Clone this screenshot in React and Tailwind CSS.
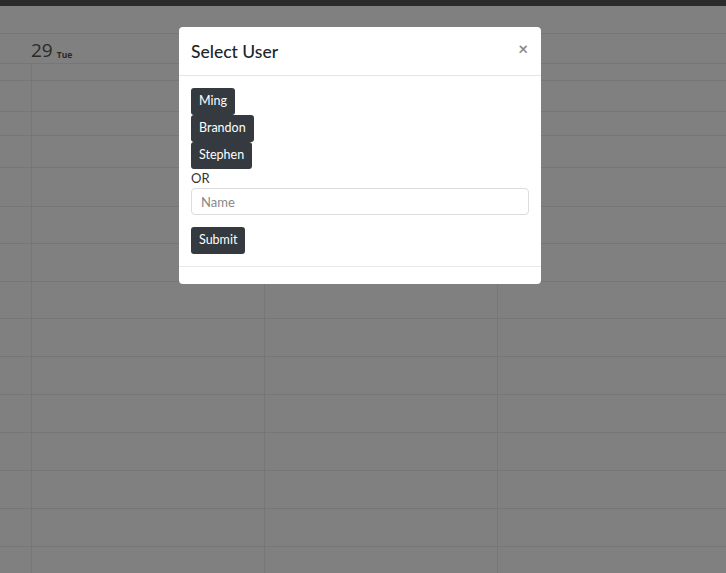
import React from "react";

const rowHeights = [17, 31, 24, 32, 39, 37, 38, 37, 38, 38, 38, 38, 38, 38, 38];

const Calendar = () => {
  return (
    <div className="h-[573px] overflow-hidden bg-[#808080]">
      <div className="h-[6px] bg-[#2b2b2b]" />
      <div className="h-[27px]" />
      <div className="h-[30px] border-t border-[#767676] flex items-end pl-[31px] pb-[3px]">
        <span className="text-[19px] leading-none text-[#2a2a2a] font-['Open_Sans',sans-serif]">29</span>
        <span className="ml-[4px] text-[8.5px] font-bold leading-none mb-[1px] text-[#2a2a2a] font-['Open_Sans',sans-serif]">Tue</span>
      </div>
      {rowHeights.map((h, i) => (
        <div
          key={i}
          className="grid grid-cols-[32px_233px_233px_1fr] border-t border-[#767676]"
          style={{ height: h }}
        >
          <div className="border-r border-[#777]" />
          <div className="border-r border-[#777]" />
          <div className="border-r border-[#777]" />
          <div />
        </div>
      ))}
    </div>
  );
};

const SelectUserModal = () => {
  const users = ["Ming", "Brandon", "Stephen"];
  return (
    <div className="absolute left-[179px] top-[27px] w-[362px] bg-white rounded-[4px] font-['Lato',sans-serif] text-[#212529]">
      <div className="h-[49px] border-b border-[#e5e5e5] flex items-center justify-between pl-[12px] pr-[13px]">
        <h2 className="text-[17.5px] font-medium leading-none mt-[2px]">Select User</h2>
        <button className="text-[#8a8a8a] text-[17px] leading-none font-bold mb-[6px]">×</button>
      </div>
      <div className="px-[12px] pt-[12px] pb-[12px]">
        <div className="flex flex-col items-start">
          {users.map((u) => (
            <button
              key={u}
              className="h-[27px] px-[8px] bg-[#343a40] text-white text-[12.5px] rounded-[3px] leading-none"
            >
              {u}
            </button>
          ))}
        </div>
        <div className="text-[13px] leading-[19px] text-[#333]">OR</div>
        <input
          placeholder="Name"
          className="block w-full h-[27px] border border-[#dcdcdc] rounded-[4px] px-[9px] text-[13px] placeholder:text-[#888] outline-none"
        />
        <button className="mt-[12px] h-[27px] px-[8px] bg-[#343a40] text-white text-[12.5px] rounded-[3px] leading-none">
          Submit
        </button>
      </div>
      <div className="h-[18px] border-t border-[#e9e9e9]" />
    </div>
  );
};

export default function App() {
  return (
    <div className="relative w-[726px] h-[573px] overflow-hidden">
      <Calendar />
      <SelectUserModal />
    </div>
  );
}
